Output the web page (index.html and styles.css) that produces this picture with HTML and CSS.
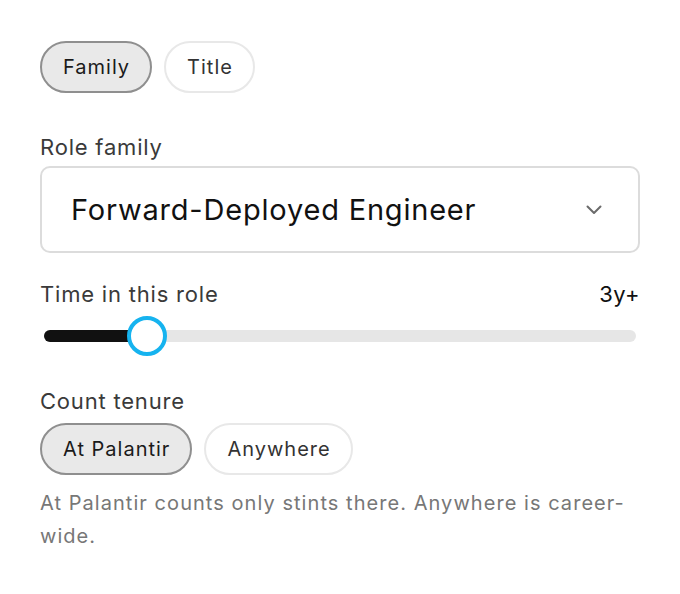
FILE: index.html
```html
<!DOCTYPE html>
<html>
<head>
<meta charset="utf-8">
<link rel="stylesheet" href="styles.css">
</head>
<body>
<div class="panel">
  <div class="seg">
    <button class="pill active">Family</button>
    <button class="pill">Title</button>
  </div>

  <div class="label label-role">Role family</div>
  <div class="select">
    <span class="select-text">Forward-Deployed Engineer</span>
    <svg class="chev" width="16" height="10" viewBox="0 0 16 10"><path d="M1.5 1.5 L8 8 L14.5 1.5" fill="none" stroke="#6b6b6b" stroke-width="2" stroke-linecap="round" stroke-linejoin="round"/></svg>
  </div>

  <div class="row-between">
    <span class="label">Time in this role</span>
    <span class="value">3y+</span>
  </div>
  <div class="slider">
    <div class="track">
      <div class="fill" style="width:103px"></div>
      <div class="thumb" style="left:103px"></div>
    </div>
  </div>

  <div class="label label-count">Count tenure</div>
  <div class="seg seg-tenure">
    <button class="pill active">At Palantir</button>
    <button class="pill">Anywhere</button>
  </div>
  <p class="help">At Palantir counts only stints there. Anywhere is career-wide.</p>
</div>
</body>
</html>
```

FILE: styles.css
```css
* { box-sizing: border-box; }
html, body { margin: 0; background: #fff; }
body { font-family: Inter, "Noto Sans", sans-serif; color: #1a1a1a; letter-spacing: 0.8px; }

.panel {
  width: 680px;
  padding: 41px 40px 0 40px;
}

.seg { display: flex; gap: 12px; }

.pill {
  font-family: inherit;
  letter-spacing: 1px;
  font-size: 20px;
  line-height: 24px;
  padding: 12px 20px 12px 21px;
  border: 2px solid #e8e8e8;
  border-radius: 999px;
  background: #fff;
  color: #333;
  margin: 0;
}
.pill.active {
  background: #e9e9e9;
  border-color: #8f8f8f;
  color: #1a1a1a;
}

.label {
  font-size: 22px;
  line-height: 26px;
  color: #3a3a3a;
}
.label-role { margin-top: 41px; }

.select {
  margin-top: 6px;
  height: 87px;
  border: 2px solid #dcdcdc;
  border-radius: 10px;
  display: flex;
  align-items: center;
  justify-content: space-between;
  padding: 0 36px 0 29px;
}
.select-text {
  font-size: 29px;
  color: #111;
}
.chev { display: block; }

.row-between {
  margin-top: 28px;
  display: flex;
  justify-content: space-between;
  align-items: baseline;
}
.value { font-size: 22px; line-height: 26px; color: #111; letter-spacing: 0.4px; }

.slider {
  margin-top: 9px;
  height: 40px;
  padding: 0 4px;
  display: flex;
  align-items: center;
}
.track {
  position: relative;
  flex: 1;
  height: 12px;
  border-radius: 6px;
  background: #e6e6e6;
}
.fill {
  height: 12px;
  border-radius: 6px;
  background: #111;
}
.thumb {
  position: absolute;
  top: 50%;
  width: 40px;
  height: 40px;
  margin: -20px 0 0 -20px;
  border-radius: 50%;
  border: 4px solid #16b3ef;
  background: #fff;
}

.label-count { margin-top: 32px; }
.seg-tenure { margin-top: 9px; }

.help {
  margin: 12px 0 0 0;
  font-size: 20px;
  line-height: 33px;
  letter-spacing: 1.05px;
  color: #777;
}
```
